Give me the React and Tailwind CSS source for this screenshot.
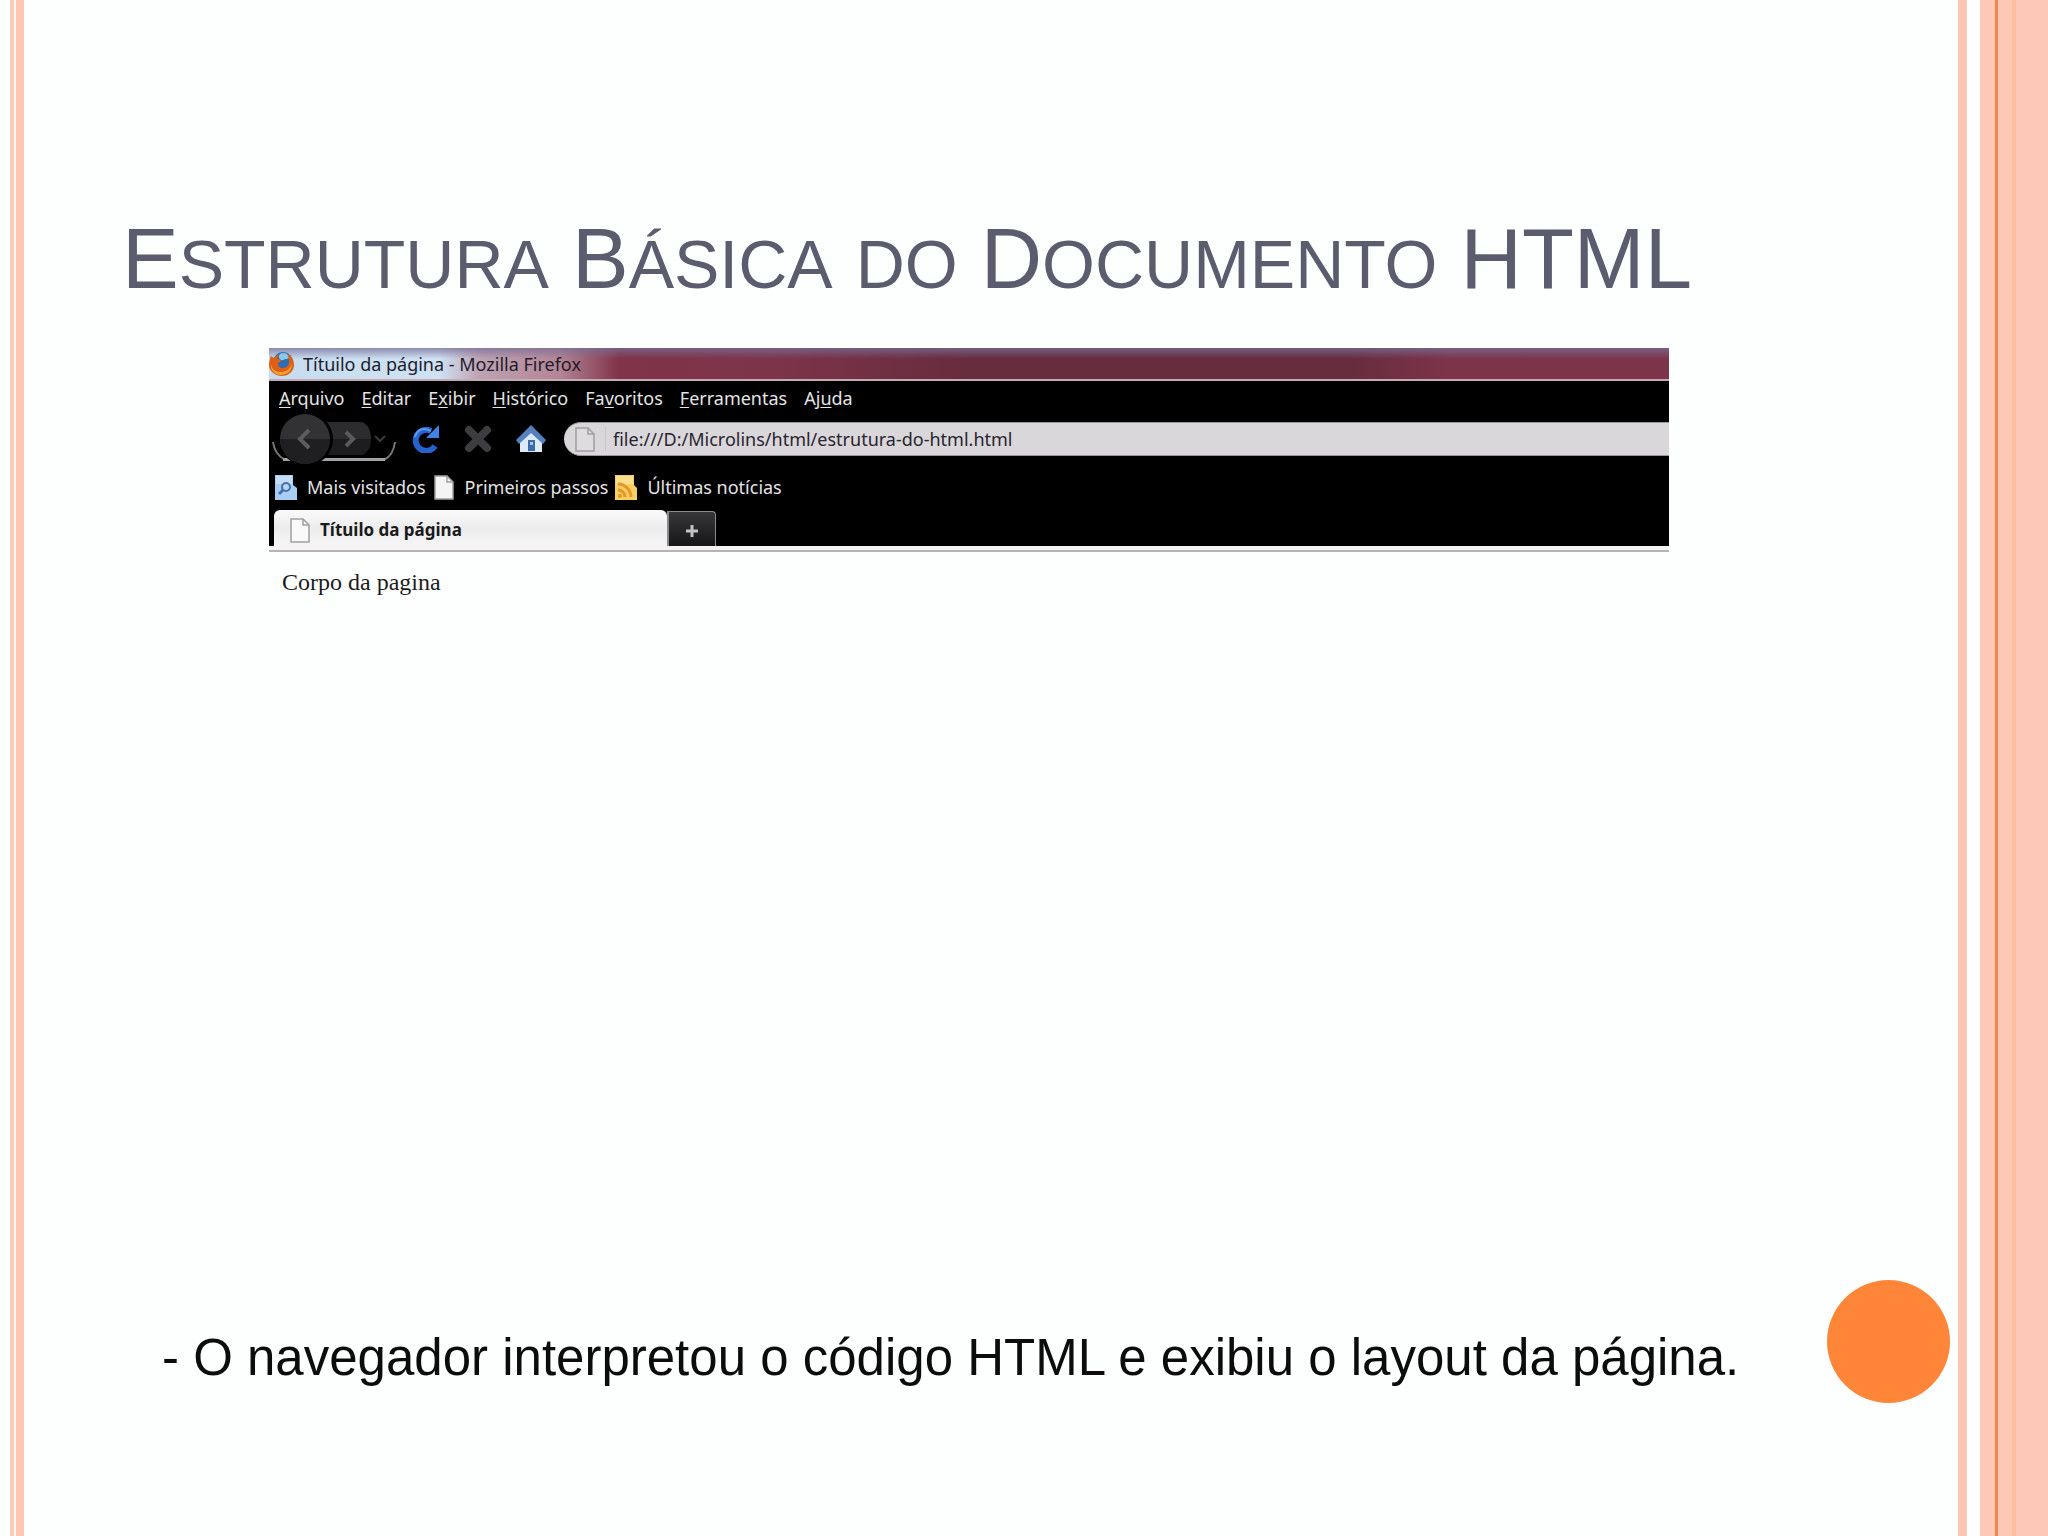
import React from "react";

const MENU_ITEMS = [
  { before: "", key: "A", after: "rquivo" },
  { before: "", key: "E", after: "ditar" },
  { before: "E", key: "x", after: "ibir" },
  { before: "", key: "H", after: "istórico" },
  { before: "Fa", key: "v", after: "oritos" },
  { before: "", key: "F", after: "erramentas" },
  { before: "Aj", key: "u", after: "da" },
];

// big = full-size capitals, the rest is drawn as small capitals
const TITLE_WORDS = [
  { big: "E", small: "STRUTURA" },
  { big: "B", small: "ÁSICA" },
  { big: "", small: "DO" },
  { big: "D", small: "OCUMENTO" },
  { big: "HTML", small: "" },
];

const FirefoxLogo = () => (
  <svg viewBox="0 0 26 26" className="h-[26px] w-[26px] shrink-0" aria-hidden="true">
    <circle cx="14" cy="11" r="10" fill="#2f6cb0" />
    <path d="M11 3c3-2 7-1 9 2 1 2-1 3-3 3s-3 2-5 1-3-4-1-6z" fill="#8cc8e8" />
    <path d="M2 5c1 1 2 1 3 2 1-2 3-3 5-3-1 1-2 3-1 4l3 1c0 2-2 2-3 3 0 3 2 5 5 5 4 0 6-3 6-7 0-3-1-5-2-7 5 2 7 6 7 11 0 6-5 11-12 11S0 20 0 14c0-4 1-6 2-9z" fill="#dc6018" />
    <path d="M2 13c1 6 5 8 10 8s9-3 11-8c0 7-5 11-11 11S1 19 2 13z" fill="#f5a02c" />
  </svg>
);

const PageIcon = ({ className, fill = "none" }) => (
  <svg viewBox="0 0 20 25" className={className} aria-hidden="true">
    <path d="M1 1h12l6 6v17H1z" fill={fill} stroke="#a0a0a0" strokeWidth="1.5" />
    <path d="M13 1v6h6" fill="none" stroke="#a0a0a0" strokeWidth="1.5" />
  </svg>
);

const SearchFolderIcon = () => (
  <svg viewBox="0 0 22 25" className="h-[25px] w-[22px]" aria-hidden="true">
    <path d="M0 0h18v10l4 3v12H0z" fill="#a9cdf0" />
    <path d="M1 1h16v8H1z" fill="#c4def5" />
    <circle cx="11" cy="12" r="4" fill="#b8d5f2" stroke="#4470b0" strokeWidth="2" />
    <path d="M8 15l-4 4" stroke="#4470b0" strokeWidth="3" />
  </svg>
);

const FeedIcon = () => (
  <svg viewBox="0 0 22 25" className="h-[25px] w-[22px]" aria-hidden="true">
    <path d="M0 0h19v10l3 3v12H0z" fill="#f8cf62" />
    <path d="M1 1h17v8H1z" fill="#fbe08b" />
    <path d="M3 9c7 0 13 6 13 13M3 15c4 0 7 3 7 7" fill="none" stroke="#e8952a" strokeWidth="3" />
    <circle cx="5" cy="21" r="2" fill="#e8952a" />
  </svg>
);

const BOOKMARKS = [
  { label: "Mais visitados", icon: <SearchFolderIcon /> },
  { label: "Primeiros passos", icon: <PageIcon className="h-[25px] w-[22px]" fill="#f4f4f4" /> },
  { label: "Últimas notícias", icon: <FeedIcon /> },
];

const TitleBar = () => (
  <div className="flex h-[33px] items-center gap-2 border-b-2 border-[#c3aab5] bg-[linear-gradient(to_bottom,rgba(120,110,150,0.75),rgba(120,110,150,0)_35%),linear-gradient(to_right,#c6dcee_0,#cfe2f4_170px,#bda3b3_210px,#b58596_290px,#803349_350px,#7d344a_500px,#672c3d_700px,#672c3d_1080px,#7d344a_1180px)]">
    <FirefoxLogo />
    <span className="text-[18px] text-[#1d1d2b]">Títuilo da página - Mozilla Firefox</span>
  </div>
);

const MenuBar = () => (
  <nav className="flex h-[33px] items-center gap-[17px] pl-[10px] text-[18px] text-[#e4e4e4]">
    {MENU_ITEMS.map((item) => (
      <button key={item.key + item.after} type="button">
        {item.before}
        <span className="underline underline-offset-2">{item.key}</span>
        {item.after}
      </button>
    ))}
  </nav>
);

const HistoryButtons = () => (
  <div className="relative flex h-[50px] w-[124px] shrink-0 items-center">
    <svg viewBox="0 0 124 50" className="absolute inset-0 h-full w-full" aria-hidden="true">
      <path d="M1 28c1 8 5 14 12 18M112 46c6-3 10-10 11-18" fill="none" stroke="#77777a" strokeWidth="2" />
      <path d="M11 45.500h102" stroke="#a3a3a6" strokeWidth="3" />
      <path d="M52 8h36c7 0 11 8 11 16s-4 17-11 17H52z" fill="#2c2c2e" />
      <path d="M52 25h47c0 8-4 16-11 16H52z" fill="#1d1d1f" />
      <circle cx="34" cy="25" r="27" fill="#000" />
      <circle cx="33" cy="25" r="25" fill="#323234" />
      <path d="M8 25a25 25 0 0 0 50 0z" fill="#1f1f21" />
    </svg>
    <button type="button" aria-label="Voltar" className="relative ml-[6px] flex h-[50px] w-[52px] items-center justify-center">
      <svg viewBox="0 0 16 24" className="h-6 w-4" aria-hidden="true">
        <path d="M13 3L4 12l9 9" fill="none" stroke="#5c5c5e" strokeWidth="4" />
      </svg>
    </button>
    <button type="button" aria-label="Avançar" className="relative flex h-[34px] w-[40px] items-center justify-center">
      <svg viewBox="0 0 14 18" className="h-[18px] w-[14px]" aria-hidden="true">
        <path d="M3 2l7 7-7 7" fill="none" stroke="#5a5a5c" strokeWidth="4" />
      </svg>
    </button>
    <button type="button" aria-label="Histórico de navegação" className="relative ml-1">
      <svg viewBox="0 0 12 8" className="h-2 w-3" aria-hidden="true">
        <path d="M1 1l5 5 5-5" fill="none" stroke="#3a3a3c" strokeWidth="2" />
      </svg>
    </button>
  </div>
);

const NavigationBar = () => (
  <div className="flex h-[50px] items-center pl-[3px]">
    <HistoryButtons />
    <button type="button" aria-label="Recarregar" className="ml-[15px] shrink-0">
      <svg viewBox="0 0 28 28" className="h-7 w-7" aria-hidden="true">
        <path d="M24 21A10.500 10.500 0 1 1 20 6" fill="none" stroke="#2763cc" strokeWidth="6" />
        <path d="M28 0v13H15z" fill="#4084e8" />
        <path d="M4 12c1-5 5-8 9-8 3 0 5 1 7 2" fill="none" stroke="#5a9af0" strokeWidth="2" />
      </svg>
    </button>
    <button type="button" aria-label="Parar" className="ml-[25px] shrink-0">
      <svg viewBox="0 0 28 28" className="h-7 w-7" aria-hidden="true">
        <path d="M5 5l18 18M23 5L5 23" fill="none" stroke="#3d3d3f" strokeWidth="8" strokeLinecap="round" />
      </svg>
    </button>
    <button type="button" aria-label="Página inicial" className="ml-6 shrink-0">
      <svg viewBox="0 0 30 28" className="h-7 w-[30px]" aria-hidden="true">
        <path d="M4 14L15 5l11 9v13H4z" fill="#dcebfa" />
        <path d="M15 0l15 15-3 4L15 8 3 19l-3-4z" fill="#5681c0" />
        <path d="M12 15h7v11h-7z" fill="#3d6aa8" />
        <path d="M14 17h3v3h-3z" fill="#a5c6ea" />
      </svg>
    </button>
    <div className="ml-[18px] flex h-[34px] flex-1 items-center rounded-l-full border-y border-[#99979a] bg-[#d9d7da] pl-[11px]">
      <PageIcon className="h-[25px] w-[20px] shrink-0" fill="#dedcdf" />
      <span className="ml-[10px] h-6 w-px bg-[#c9c7ca]" />
      <input
        type="text"
        aria-label="Endereço"
        defaultValue="file:///D:/Microlins/html/estrutura-do-html.html"
        className="ml-[7px] min-w-0 flex-1 bg-transparent text-[18px] text-[#2a2530] outline-none"
      />
    </div>
  </div>
);

const BookmarksBar = () => (
  <div className="flex h-[46px] items-center gap-[7px] pl-[6px] text-[18px] text-[#e4e4e4]">
    {BOOKMARKS.map((bookmark) => (
      <a key={bookmark.label} href="#" className="flex items-center gap-[10px]">
        {bookmark.icon}
        {bookmark.label}
      </a>
    ))}
  </div>
);

const TabBar = () => (
  <div className="flex h-9 items-stretch pl-[5px]">
    <button
      type="button"
      className="flex w-[393px] items-center gap-[10px] rounded-t-md bg-linear-to-b from-[#fafafa] via-[#ececee] to-[#f5f5f5] pt-1 pl-4 text-[17px] font-bold text-[#1a1a1a]"
    >
      <PageIcon className="h-[25px] w-[20px]" fill="#fafafa" />
      Títuilo da página
    </button>
    <button
      type="button"
      aria-label="Nova aba"
      className="mt-px flex w-[49px] items-center justify-center rounded-tr-sm border-t border-r border-l-2 border-[#8b8b8d] bg-linear-to-b from-[#38383a] to-[#161618] pt-1"
    >
      <svg viewBox="0 0 12 12" className="h-3 w-3" aria-hidden="true">
        <path d="M6 0v12M0 6h12" stroke="#c4c4c6" strokeWidth="3" />
      </svg>
    </button>
  </div>
);

const BrowserWindow = () => (
  <section className="mr-[289px] ml-[245px] font-['Noto_Sans',sans-serif] leading-6">
    <TitleBar />
    <div className="bg-black">
      <MenuBar />
      <NavigationBar />
      <BookmarksBar />
      <TabBar />
    </div>
    <div className="h-[6px] border-b-2 border-[#b5b3b6] bg-[#f4f4f4]" />
    <p className="mt-4 pl-[13px] font-['Liberation_Serif',serif] text-[24px] leading-7 text-[#1c1c1c]">Corpo da pagina</p>
  </section>
);

const App = () => {
  return (
    <div className="flex min-h-screen bg-[#fdfffe]">
      {/* Left stripes */}
      <div className="flex shrink-0 pl-[10px]">
        <div className="w-1 bg-[#fdcab8]" />
        <div className="w-[2px] bg-[#fffaf4]" />
        <div className="w-2 bg-[#fdc7b4]" />
      </div>

      <main className="flex min-w-0 flex-1 flex-col font-['Liberation_Sans',sans-serif]">
        <h1 className="flex items-baseline gap-[23px] pt-[210px] pl-[98px] text-[85px] leading-[98px] whitespace-nowrap text-[#5b5d6e]">
          {TITLE_WORDS.map((word) => (
            <span key={word.big + word.small}>
              {word.big}
              <span className="text-[68px]">{word.small}</span>
            </span>
          ))}
        </h1>
        <div className="mt-[35px]">
          <BrowserWindow />
        </div>
        <div className="mt-auto mb-[133px] flex items-center justify-between pr-2 pl-[138px]">
          <p className="pt-8 text-[51px] leading-[60px] whitespace-nowrap text-[#0c0c0c]">
            - O navegador interpretou o código HTML e exibiu o layout da página.
          </p>
          <div className="h-[123px] w-[123px] shrink-0 rounded-full bg-[#ff8639]" />
        </div>
      </main>

      {/* Right stripes */}
      <div className="flex shrink-0">
        <div className="w-[9px] bg-[#fdc7b4]" />
        <div className="w-[13px] bg-white" />
        <div className="w-[15px] bg-[#fdc8b7]" />
        <div className="w-[3px] bg-[#f58548]" />
        <div className="w-[14px] bg-[#fdc9b6]" />
        <div className="w-1 bg-[#fdbfa0]" />
        <div className="w-8 bg-[#fdc8b7]" />
      </div>
    </div>
  );
};

export default App;
